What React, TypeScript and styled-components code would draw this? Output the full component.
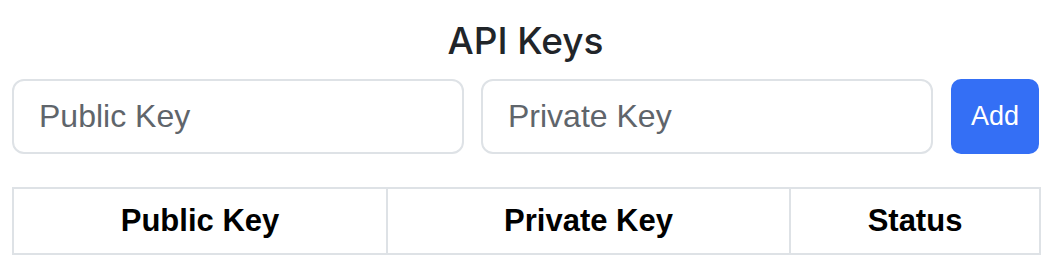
import * as React from 'react';
import styled, { createGlobalStyle } from 'styled-components';

const GlobalStyle = createGlobalStyle`
  body {
    margin: 0;
    background: #ffffff;
    font-family: 'Liberation Sans', Arial, sans-serif;
    color: #212529;
  }
`;

const columns = [
  { label: 'Public Key', width: 374 },
  { label: 'Private Key', width: 403 },
  { label: 'Status', width: 250 },
];

const App: React.FC = () => {
  const [publicKey, setPublicKey] = React.useState('');
  const [privateKey, setPrivateKey] = React.useState('');

  return (
    <>
      <GlobalStyle />
      <Page>
        <Title>API Keys</Title>
        <Form onSubmit={(e) => e.preventDefault()}>
          <Field
            placeholder="Public Key"
            value={publicKey}
            onChange={(e) => setPublicKey(e.target.value)}
          />
          <Field
            placeholder="Private Key"
            value={privateKey}
            onChange={(e) => setPrivateKey(e.target.value)}
          />
          <AddButton type="submit">Add</AddButton>
        </Form>
        <Table>
          <thead>
            <tr>
              {columns.map((c) => (
                <HeadCell key={c.label} $width={c.width}>
                  {c.label}
                </HeadCell>
              ))}
            </tr>
          </thead>
          <tbody />
        </Table>
      </Page>
    </>
  );
};

export default App;

const Page = styled.div`
  width: 1027px;
  padding: 0 19px 0 12px;
  display: flex;
  flex-direction: column;
`;

const Title = styled.h3`
  margin: 18px 0 0;
  font-family: Inter, 'Liberation Sans', Arial, sans-serif;
  font-size: 37px;
  font-weight: 500;
  line-height: 46px;
  text-align: center;
  color: #212529;
`;

const Form = styled.form`
  display: flex;
  align-items: center;
  gap: 17px;
  margin-top: 15px;
`;

const Field = styled.input`
  flex: 1;
  min-width: 0;
  height: 75px;
  box-sizing: border-box;
  padding: 0 25px;
  border: 2px solid #dee2e6;
  border-radius: 12px;
  font-family: 'Liberation Sans', Arial, sans-serif;
  font-size: 32px;
  color: #212529;
  outline: none;
  &::placeholder {
    color: #5f656b;
  }
`;

const AddButton = styled.button`
  height: 75px;
  width: 88px;
  flex-shrink: 0;
  margin-left: 1px;
  border: none;
  border-radius: 10px;
  background: #346ff5;
  color: #ffffff;
  font-family: 'Liberation Sans', Arial, sans-serif;
  font-size: 27px;
  cursor: pointer;
`;

const Table = styled.table`
  margin-top: 33px;
  width: 100%;
  border-collapse: collapse;
  table-layout: fixed;
`;

const HeadCell = styled.th<{ $width: number }>`
  width: ${(p) => p.$width}px;
  height: 66px;
  box-sizing: border-box;
  padding: 0;
  border: 2px solid #dee2e6;
  font-size: 31px;
  font-weight: 700;
  color: #000000;
  text-align: center;
  vertical-align: middle;
`;
